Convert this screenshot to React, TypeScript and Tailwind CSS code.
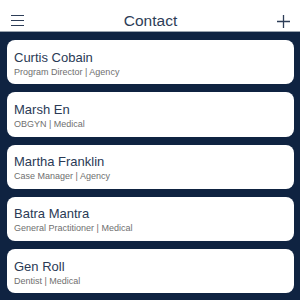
import React from "react";

interface Contact {
  id: number;
  name: string;
  title: string;
  org: string;
}

const contacts: Contact[] = [
  { id: 1, name: "Curtis Cobain", title: "Program Director", org: "Agency" },
  { id: 2, name: "Marsh En", title: "OBGYN", org: "Medical" },
  { id: 3, name: "Martha Franklin", title: "Case Manager", org: "Agency" },
  { id: 4, name: "Batra Mantra", title: "General Practitioner", org: "Medical" },
  { id: 5, name: "Gen Roll", title: "Dentist", org: "Medical" },
];

export default function App() {
  return (
    <div className="w-[300px] h-[300px] overflow-hidden bg-[#0f2341] font-['Helvetica','Liberation_Sans',Arial,sans-serif]">
      <header className="h-[32px] bg-white border-b border-[#9aa3ae] flex items-center justify-between pt-[10px] pl-[11px] pr-[10px]">
        <svg width="13" height="11" viewBox="0 0 13 11" className="text-[#2d3d57]">
          <path d="M0 0.5H13M0 5.5H13M0 10.5H13" stroke="currentColor" strokeWidth="1.2" />
        </svg>
        <h1 className="text-[15.5px] text-[#2d3d57] leading-none">Contact</h1>
        <svg width="13" height="13" viewBox="0 0 13 13" className="text-[#2d3d57] mt-[2px]">
          <path d="M6.5 0V13M0 6.5H13" stroke="currentColor" strokeWidth="1.3" />
        </svg>
      </header>
      <ul className="flex flex-col gap-[8px] pt-[8px] pl-[7px] pr-[6.5px]">
        {contacts.map((c) => (
          <li
            key={c.id}
            className="h-[44.25px] bg-white rounded-[8px] pl-[7px] pt-[9.5px] flex flex-col"
          >
            <div className="text-[13px] leading-[16px] text-[#2a3a55]">{c.name}</div>
            <div className="text-[9px] leading-[12px] text-[#6f6f6f]">
              {c.title} | {c.org}
            </div>
          </li>
        ))}
      </ul>
    </div>
  );
}
